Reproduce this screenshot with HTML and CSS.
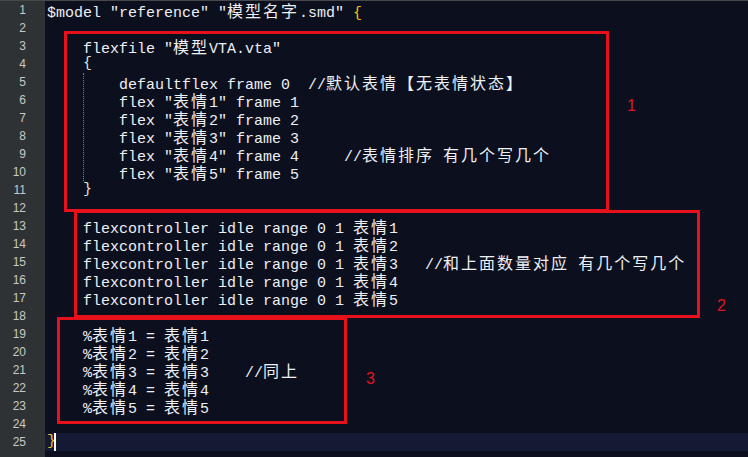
FILE: index.html
```html
<!DOCTYPE html>
<html>
<head>
<meta charset="utf-8">
<link rel="stylesheet" href="styles.css">
</head>
<body>
<div class="editor">
  <div class="gutter">
    <div>1</div><div>2</div><div>3</div><div>4</div><div>5</div>
    <div>6</div><div>7</div><div>8</div><div>9</div><div>10</div>
    <div>11</div><div>12</div><div>13</div><div>14</div><div>15</div>
    <div>16</div><div>17</div><div>18</div><div>19</div><div>20</div>
    <div>21</div><div>22</div><div>23</div><div>24</div><div>25</div>
  </div>
  <div class="code">
    <div class="ln">$model "reference" "<span class="cn">模型名字</span>.smd" <span class="match">{</span></div>
    <div class="ln"></div>
    <div class="ln">    flexfile "<span class="cn">模型</span>VTA.vta"</div>
    <div class="ln">    <span class="brace">{</span></div>
    <div class="block">
      <div class="ln">        defaultflex frame 0  //<span class="cn">默认表情【无表情状态】</span></div>
      <div class="ln">        flex "<span class="cn">表情</span>1" frame 1</div>
      <div class="ln">        flex "<span class="cn">表情</span>2" frame 2</div>
      <div class="ln">        flex "<span class="cn">表情</span>3" frame 3</div>
      <div class="ln">        flex "<span class="cn">表情</span>4" frame 4     //<span class="cn">表情排序</span> <span class="cn">有几个写几个</span></div>
      <div class="ln">        flex "<span class="cn">表情</span>5" frame 5</div>
    </div>
    <div class="ln">    <span class="brace">}</span></div>
    <div class="ln"></div>
    <div class="ln">    flexcontroller idle range 0 1 <span class="cn">表情</span>1</div>
    <div class="ln">    flexcontroller idle range 0 1 <span class="cn">表情</span>2</div>
    <div class="ln">    flexcontroller idle range 0 1 <span class="cn">表情</span>3   //<span class="cn">和上面数量对应</span> <span class="cn">有几个写几个</span></div>
    <div class="ln">    flexcontroller idle range 0 1 <span class="cn">表情</span>4</div>
    <div class="ln">    flexcontroller idle range 0 1 <span class="cn">表情</span>5</div>
    <div class="ln"></div>
    <div class="ln">    %<span class="cn">表情</span>1 = <span class="cn">表情</span>1</div>
    <div class="ln">    %<span class="cn">表情</span>2 = <span class="cn">表情</span>2</div>
    <div class="ln">    %<span class="cn">表情</span>3 = <span class="cn">表情</span>3    //<span class="cn">同上</span></div>
    <div class="ln">    %<span class="cn">表情</span>4 = <span class="cn">表情</span>4</div>
    <div class="ln">    %<span class="cn">表情</span>5 = <span class="cn">表情</span>5</div>
    <div class="ln"></div>
    <div class="ln current"><span class="match">}</span><span class="caret"></span></div>
  </div>
</div>
<div class="box box1"></div>
<div class="box box2"></div>
<div class="box box3"></div>
<div class="tag tag1">1</div>
<div class="tag tag2">2</div>
<div class="tag tag3">3</div>
</body>
</html>
```
FILE: styles.css
```css
html, body {
  margin: 0;
  padding: 0;
}
body {
  position: relative;
  width: 748px;
  height: 457px;
  overflow: hidden;
  background: #0c0f1e;
}
.editor {
  display: flex;
  border-top: 1px solid #46484a;
  height: 456px;
}
.gutter {
  flex: none;
  width: 45px;
  background: #2e3234;
}
.gutter div {
  height: 18px;
  line-height: 18px;
  text-align: right;
  padding-right: 19px;
  font-family: "Liberation Sans", Arial, sans-serif;
  font-size: 12px;
  color: #c6cac6;
}
.code {
  flex: 1;
  padding-left: 2px;
  font-family: "Liberation Mono", "Courier New", monospace;
  font-size: 15px;
  color: #eef0f4;
}
.ln {
  height: 18px;
  line-height: 18px;
  white-space: pre;
}
.block {
  position: relative;
}
.block::before {
  content: "";
  position: absolute;
  left: 36px;
  top: 0;
  bottom: 0;
  border-left: 1px dotted #7a7c80;
}
.cn {
  font-family: "Noto Sans CJK SC", sans-serif;
  font-size: 16px;
  line-height: 18px;
  letter-spacing: 2px;
}
.match {
  color: #f2c21a;
}
.brace {
  color: #dfe2d8;
}
.current {
  background: #141a33;
  margin-left: -2px;
  padding-left: 2px;
}
.caret {
  display: inline-block;
  width: 2px;
  height: 18px;
  margin-left: -2px;
  vertical-align: top;
  background: #ffffff;
}
.box {
  position: absolute;
  box-sizing: border-box;
  border: 3px solid #e8101a;
}
.box1 {
  left: 64px;
  top: 31px;
  width: 545px;
  height: 181px;
}
.box2 {
  left: 74px;
  top: 210px;
  width: 626px;
  height: 108px;
}
.box3 {
  left: 57px;
  top: 317px;
  width: 290px;
  height: 107px;
}
.tag {
  position: absolute;
  font-family: "Liberation Sans", Arial, sans-serif;
  font-size: 16px;
  line-height: 16px;
  color: #e3141b;
}
.tag1 {
  left: 627px;
  top: 98px;
}
.tag2 {
  left: 717px;
  top: 298px;
}
.tag3 {
  left: 366px;
  top: 371px;
}
```
